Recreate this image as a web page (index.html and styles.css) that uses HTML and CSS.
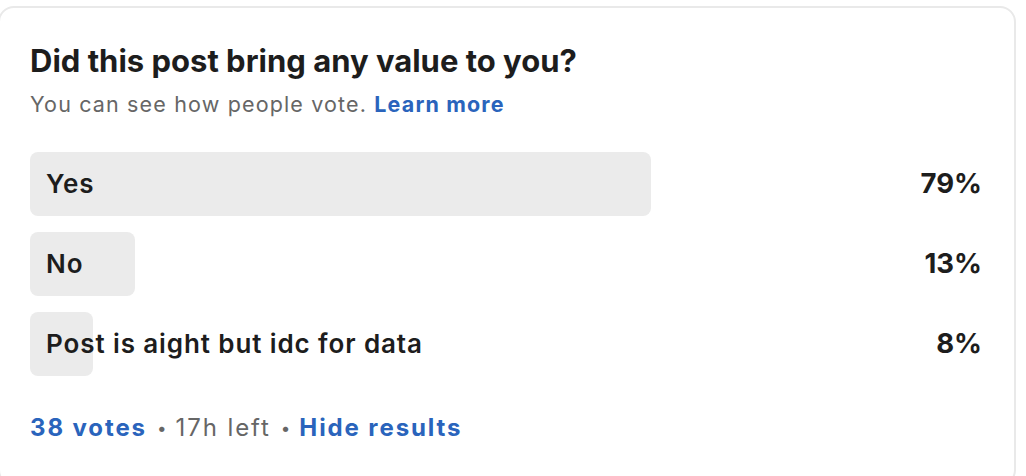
FILE: index.html
```html
<!DOCTYPE html>
<html lang="en">
<head>
<meta charset="utf-8">
<title>Poll</title>
<link rel="stylesheet" href="styles.css">
</head>
<body>
<div class="card">
  <h1 class="title">Did this post bring any value to you?</h1>
  <p class="sub">You can see how people vote. <a class="link" href="#">Learn more</a></p>
  <div class="options">
    <div class="row">
      <div class="track">
        <div class="bar" style="width:79%"></div>
        <span class="label">Yes</span>
      </div>
      <span class="pct">79%</span>
    </div>
    <div class="row">
      <div class="track">
        <div class="bar" style="width:13.3%"></div>
        <span class="label">No</span>
      </div>
      <span class="pct">13%</span>
    </div>
    <div class="row">
      <div class="track">
        <div class="bar" style="width:8%"></div>
        <span class="label">Post is aight but idc for data</span>
      </div>
      <span class="pct">8%</span>
    </div>
  </div>
  <p class="foot"><a class="link" href="#">38 votes</a><span class="dot">•</span>17h left<span class="dot">•</span><a class="link" href="#">Hide results</a></p>
</div>
</body>
</html>
```
FILE: styles.css
```css
html, body {
  margin: 0;
  padding: 0;
  background: #ffffff;
  height: 476px;
  overflow: hidden;
}
body {
  font-family: Inter, "Noto Sans", "Liberation Sans", sans-serif;
  color: #1d1d1d;
}
.card {
  margin: 6px 0 0 -2px;
  width: 1018px;
  box-sizing: border-box;
  height: 480px;
  border: 2px solid #e9e9e9;
  border-radius: 16px;
  padding: 35px 32px 0 30px;
}
.title {
  margin: 0;
  font-size: 31px;
  line-height: 36px;
  font-weight: 700;
  color: #1d1d1d;
}
.sub {
  margin: 11px 0 0 0;
  font-size: 21.5px;
  line-height: 28px;
  letter-spacing: 1.15px;
  color: #666666;
}
.link {
  color: #2a64bc;
  font-weight: 700;
  text-decoration: none;
}
.options {
  margin-top: 34px;
  display: flex;
  flex-direction: column;
  gap: 16px;
}
.row {
  display: flex;
  align-items: center;
  height: 64px;
}
.track {
  width: 786px;
  height: 64px;
  display: grid;
  align-items: center;
}
.bar {
  grid-area: 1 / 1;
  height: 64px;
  background: #ebebeb;
  border-radius: 8px;
}
.label {
  grid-area: 1 / 1;
  padding: 0 0 1px 16px;
  font-size: 26px;
  letter-spacing: 0.9px;
  font-weight: 600;
  color: #1d1d1d;
  white-space: nowrap;
}
.pct {
  flex: 1;
  text-align: right;
  padding-bottom: 2px;
  font-size: 27.5px;
  font-weight: 700;
  color: #1d1d1d;
}
.foot {
  margin: 37px 0 0 0;
  font-size: 24px;
  line-height: 30px;
  letter-spacing: 1.9px;
  color: #666666;
}
.dot {
  margin: 0 9px 0 10px;
  font-size: 17px;
  letter-spacing: 0;
  vertical-align: 2px;
}
```
